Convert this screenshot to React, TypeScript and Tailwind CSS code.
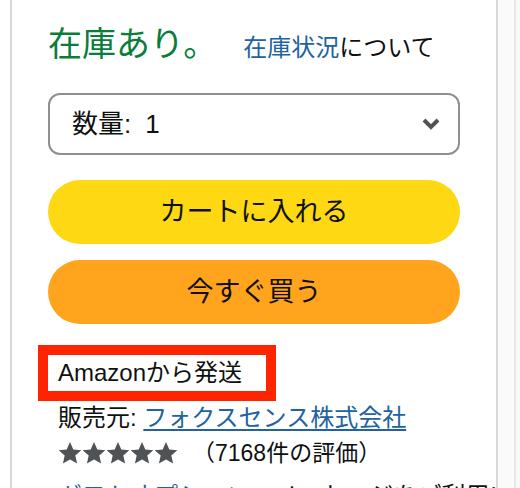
import React from 'react';

const FONT = { fontFamily: '"Liberation Sans", "Noto Sans CJK JP", sans-serif' };

const Star: React.FC = () => (
  <svg width="24" height="24" viewBox="0 0 24 24" className="shrink-0">
    <path
      d="M12 1l3.3 7.4 8 .8-6 5.4 1.8 8L12 18.5l-7.1 4.1 1.8-8-6-5.4 8-.8z"
      fill="#4f5356"
    />
  </svg>
);

export default function App() {
  return (
    <div className="flex w-[520px] h-[488px] overflow-hidden bg-white text-[#0f1111]" style={FONT}>
      <div className="w-[10px] shrink-0 bg-white" />
      {/* buy box panel */}
      <div className="w-[488px] shrink-0 border-x-2 border-[#d5d9d9] bg-white px-[36px] pt-[24px]">
        <div className="flex items-baseline h-[40px]">
          <span className="text-[34px] leading-[40px] text-[#0a7d3b]">在庫あり。</span>
          <span className="ml-[26px] text-[24px]">
            <a className="text-[#2162a1]">在庫状況</a>について
          </span>
        </div>

        <div className="mt-[29px] flex h-[62px] items-center justify-between rounded-[12px] border-2 border-[#8d9090] bg-white pl-[22px] pr-[18px]">
          <span className="text-[26px]">
            数量:<span className="ml-[14px]">1</span>
          </span>
          <svg width="18" height="12" viewBox="0 0 18 12">
            <path d="M2 2l7 7 7-7" fill="none" stroke="#4f5356" strokeWidth="4" />
          </svg>
        </div>

        <button className="mt-[25px] flex h-[64px] w-full items-center justify-center rounded-full bg-[#ffd814] text-[27px] text-[#0f1111]">
          カートに入れる
        </button>
        <button className="mt-[16px] flex h-[64px] w-full items-center justify-center rounded-full bg-[#ffa41c] text-[27px] text-[#0f1111]">
          今すぐ買う
        </button>

        {/* seller info */}
        <div className="mt-[31px]">
          <div className="relative w-[218px]">
            <div className="flex h-[36px] items-center pl-[10px] text-[24px]">Amazonから発送</div>
            <div className="pointer-events-none absolute -inset-[10px] border-[10px] border-[#ff2400]" />
          </div>
          <div className="mt-[10px] flex h-[34px] items-center pl-[10px] text-[24px]">
            販売元:&nbsp;<a className="text-[#2162a1] underline underline-offset-[3px]">フォクスセンス株式会社</a>
          </div>
          <div className="flex h-[36px] items-center pl-[10px] text-[23px]">
            <div className="flex">
              <Star />
              <Star />
              <Star />
              <Star />
              <Star />
            </div>
            <span className="ml-[14px]">（7168件の評価）</span>
          </div>
          <div className="mt-[8px] flex h-[34px] items-center pl-[10px] text-[24px] whitespace-nowrap">
            <a className="text-[#2162a1]">ギフトオプション</a>・メッセージをご利用いただけます
          </div>
        </div>
      </div>
      <div className="w-[16px] shrink-0 bg-[#fafafa]" />
      <div className="flex-1 border-l-2 border-[#e8e8e8] bg-[#f8f8f8]" />
    </div>
  );
}
